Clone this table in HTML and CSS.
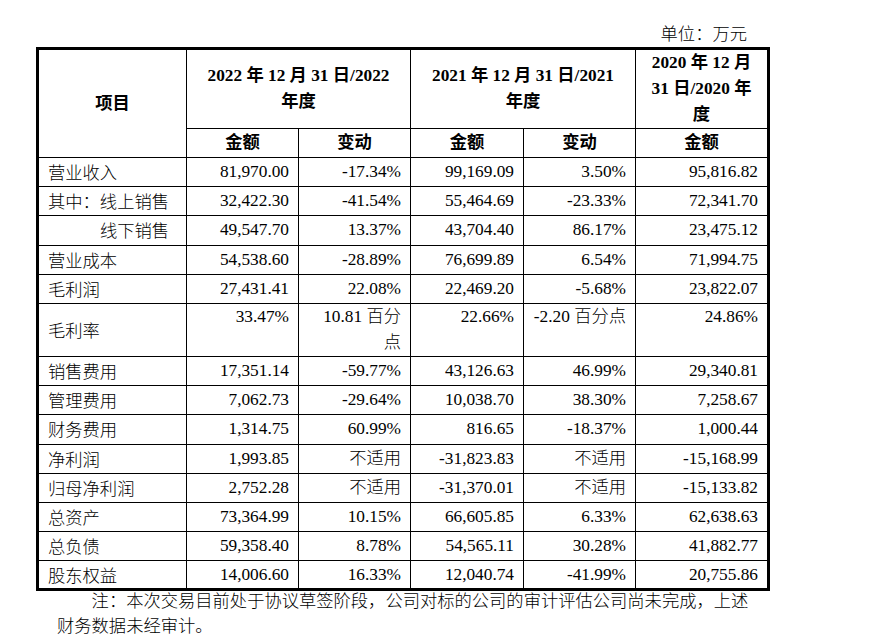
FILE: index.html
```html
<!DOCTYPE html>
<html lang="zh-CN">
<head>
<meta charset="utf-8">
<title>财务数据</title>
<link rel="stylesheet" href="styles.css">
</head>
<body>
<div class="page">
  <div class="unit">单位：万元</div>
  <table class="fin">
    <colgroup>
      <col class="c-item">
      <col class="c-amt">
      <col class="c-chg">
      <col class="c-amt2">
      <col class="c-chg">
      <col class="c-last">
    </colgroup>
    <thead>
      <tr class="hrow1">
        <th rowspan="2">项目</th>
        <th colspan="2">2022 年 12 月 31 日/2022<br>年度</th>
        <th colspan="2">2021 年 12 月 31 日/2021<br>年度</th>
        <th>2020 年 12 月<br>31 日/2020 年<br>度</th>
      </tr>
      <tr class="hrow2">
        <th>金额</th>
        <th>变动</th>
        <th>金额</th>
        <th>变动</th>
        <th>金额</th>
      </tr>
    </thead>
    <tbody>
      <tr><td class="lbl">营业收入</td><td>81,970.00</td><td>-17.34%</td><td>99,169.09</td><td>3.50%</td><td>95,816.82</td></tr>
      <tr><td class="lbl">其中：线上销售</td><td>32,422.30</td><td>-41.54%</td><td>55,464.69</td><td>-23.33%</td><td>72,341.70</td></tr>
      <tr><td class="lbl sub">线下销售</td><td>49,547.70</td><td>13.37%</td><td>43,704.40</td><td>86.17%</td><td>23,475.12</td></tr>
      <tr><td class="lbl">营业成本</td><td>54,538.60</td><td>-28.89%</td><td>76,699.89</td><td>6.54%</td><td>71,994.75</td></tr>
      <tr><td class="lbl">毛利润</td><td>27,431.41</td><td>22.08%</td><td>22,469.20</td><td>-5.68%</td><td>23,822.07</td></tr>
      <tr class="tall"><td class="lbl">毛利率</td><td>33.47%</td><td>10.81 百分<br>点</td><td>22.66%</td><td>-2.20 百分点</td><td>24.86%</td></tr>
      <tr><td class="lbl">销售费用</td><td>17,351.14</td><td>-59.77%</td><td>43,126.63</td><td>46.99%</td><td>29,340.81</td></tr>
      <tr><td class="lbl">管理费用</td><td>7,062.73</td><td>-29.64%</td><td>10,038.70</td><td>38.30%</td><td>7,258.67</td></tr>
      <tr><td class="lbl">财务费用</td><td>1,314.75</td><td>60.99%</td><td>816.65</td><td>-18.37%</td><td>1,000.44</td></tr>
      <tr><td class="lbl">净利润</td><td>1,993.85</td><td>不适用</td><td>-31,823.83</td><td>不适用</td><td>-15,168.99</td></tr>
      <tr><td class="lbl">归母净利润</td><td>2,752.28</td><td>不适用</td><td>-31,370.01</td><td>不适用</td><td>-15,133.82</td></tr>
      <tr><td class="lbl">总资产</td><td>73,364.99</td><td>10.15%</td><td>66,605.85</td><td>6.33%</td><td>62,638.63</td></tr>
      <tr><td class="lbl">总负债</td><td>59,358.40</td><td>8.78%</td><td>54,565.11</td><td>30.28%</td><td>41,882.77</td></tr>
      <tr class="last"><td class="lbl">股东权益</td><td>14,006.60</td><td>16.33%</td><td>12,040.74</td><td>-41.99%</td><td>20,755.86</td></tr>
    </tbody>
  </table>
  <p class="note">注：本次交易目前处于协议草签阶段，公司对标的公司的审计评估公司尚未完成，上述财务数据未经审计。</p>
</div>
</body>
</html>
```

FILE: styles.css
```css
html, body {
  margin: 0;
  padding: 0;
  background: #fff;
}

body {
  color: #000;
  font-family: "Liberation Serif", "Noto Sans CJK SC", serif;
  font-size: 17.3px;
  font-weight: 300;
}

.page {
  padding: 20px 0 0 36px;
}

.unit {
  width: 711px;
  text-align: right;
  line-height: 26px;
  margin-bottom: 1px;
  font-family: "Noto Sans CJK SC", sans-serif;
}

.fin {
  width: 734px;
  table-layout: fixed;
  border-collapse: separate;
  border-spacing: 0;
  border: 3px solid #000;
}

.c-item { width: 148px; }
.c-amt  { width: 112px; }
.c-chg  { width: 112px; }
.c-amt2 { width: 113px; }
.c-last { width: 131px; }

.fin th,
.fin td {
  box-sizing: border-box;
  border-right: 1px solid #000;
  border-bottom: 1px solid #000;
  padding: 0 9px;
  line-height: 26px;
  vertical-align: middle;
}

.fin tr > :last-child {
  border-right: none;
}

.fin tr.last > td {
  border-bottom: none;
}

.fin th {
  font-weight: 700;
  text-align: center;
}

.hrow1 {
  height: 79px;
}

.hrow2 {
  height: 29px;
}

.fin tbody tr {
  height: 29.2px;
}

.fin tbody tr.tall {
  height: 53px;
}

.fin tbody tr.last {
  height: 27px;
}

.fin td {
  text-align: right;
  white-space: nowrap;
}

.fin td.lbl {
  text-align: left;
  font-family: "Noto Sans CJK SC", sans-serif;
}

.fin td.sub {
  text-indent: 3em;
}

.tall td {
  vertical-align: top;
}

.tall td.lbl {
  vertical-align: middle;
}

.note {
  margin: -4.5px 0 0 21px;
  width: 694px;
  text-indent: 2em;
  line-height: 25px;
  font-family: "Noto Sans CJK SC", sans-serif;
}
```
